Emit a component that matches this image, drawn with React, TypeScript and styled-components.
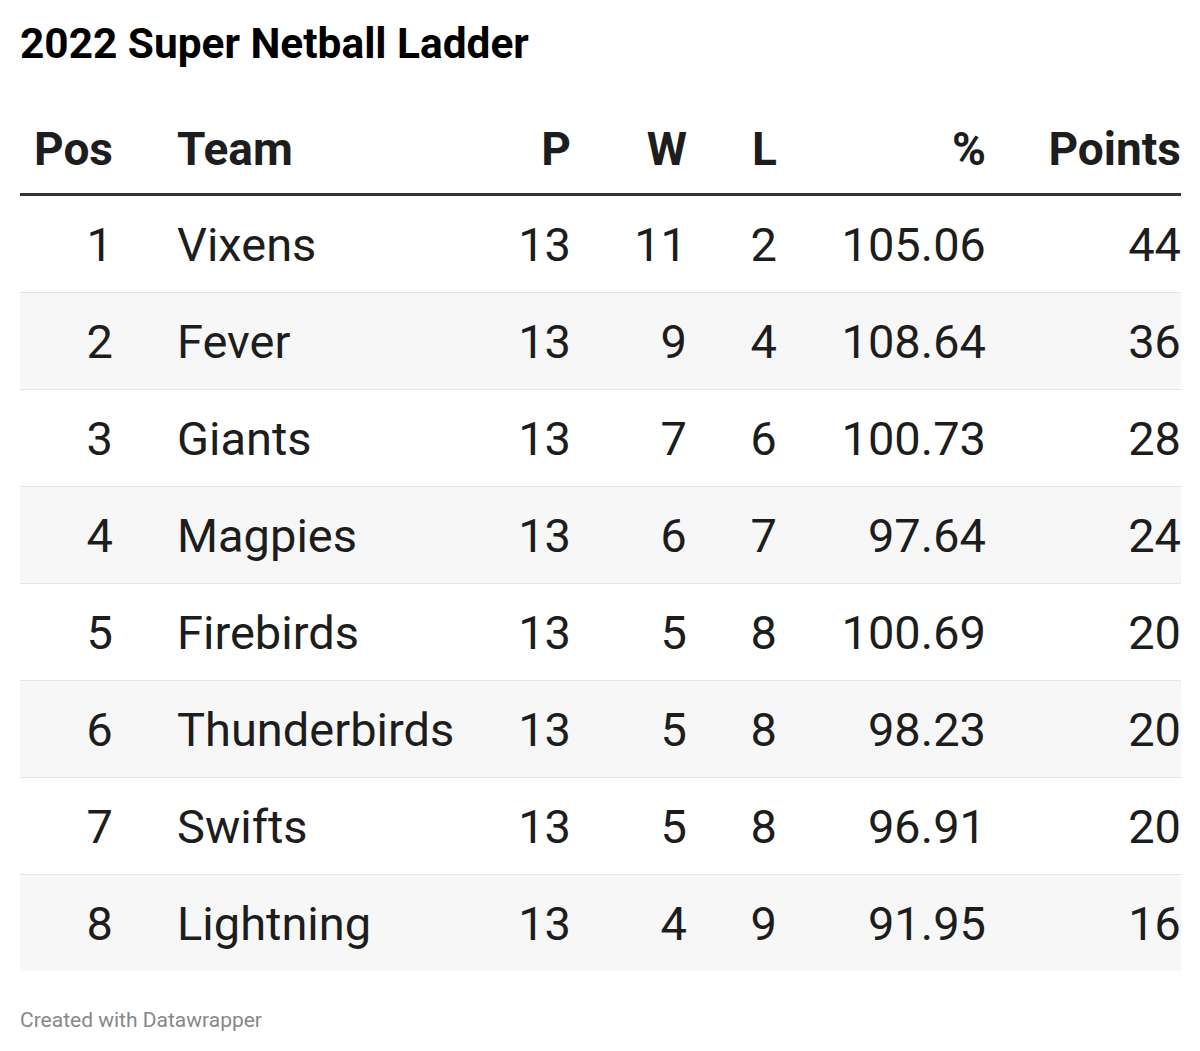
import React from "react";
import styled, { createGlobalStyle } from "styled-components";

const Global = createGlobalStyle`
  html, body { margin: 0; padding: 0; background: #ffffff; }
  body { font-family: Roboto, "Liberation Sans", Arial, sans-serif; color: #1d1d1d; }
`;

const Page = styled.div`
  width: 1200px;
  height: 1051px;
  box-sizing: border-box;
  padding: 20px 19px 0 20px;
  display: flex;
  flex-direction: column;
`;

const Title = styled.h1`
  margin: 0;
  font-size: 42.4px;
  font-weight: 700;
  line-height: 48px;
  color: #000000;
`;

const Table = styled.div`
  margin-top: 53px;
  display: flex;
  flex-direction: column;
`;

const COLS = "93px 367px 91px 116px 90px 209px 195px";

const HeaderRow = styled.div`
  display: grid;
  grid-template-columns: ${COLS};
  height: 75px;
  box-sizing: border-box;
  padding-bottom: 17px;
  align-items: center;
  border-bottom: 3px solid #333333;
`;

const Row = styled.div<{ $alt: boolean; $first: boolean }>`
  display: grid;
  grid-template-columns: ${COLS};
  height: 96px;
  align-items: center;
  background: ${(p) => (p.$alt ? "#f7f7f7" : "#ffffff")};
  border-top: ${(p) => (p.$first ? "none" : "1px solid #e4e4e4")};
`;

const HeadCell = styled.div<{ $align: "left" | "right"; $pl?: number }>`
  font-size: 46px;
  font-weight: 700;
  color: #1d1d1d;
  text-align: ${(p) => p.$align};
  padding-left: ${(p) => p.$pl ?? 0}px;
  white-space: nowrap;
`;

const Cell = styled.div<{ $align: "left" | "right"; $pl?: number }>`
  font-size: 47px;
  font-weight: 400;
  color: #1d1d1d;
  text-align: ${(p) => p.$align};
  padding-left: ${(p) => p.$pl ?? 0}px;
  white-space: nowrap;
  font-variant-numeric: tabular-nums;
`;

const Footer = styled.div`
  margin-top: 37px;
  font-size: 21px;
  color: #888888;
`;

const data = [
  [1, "Vixens", 13, 11, 2, "105.06", 44],
  [2, "Fever", 13, 9, 4, "108.64", 36],
  [3, "Giants", 13, 7, 6, "100.73", 28],
  [4, "Magpies", 13, 6, 7, "97.64", 24],
  [5, "Firebirds", 13, 5, 8, "100.69", 20],
  [6, "Thunderbirds", 13, 5, 8, "98.23", 20],
  [7, "Swifts", 13, 5, 8, "96.91", 20],
  [8, "Lightning", 13, 4, 9, "91.95", 16],
] as const;

export default function App() {
  return (
    <>
      <Global />
      <Page>
        <Title>2022 Super Netball Ladder</Title>
        <Table>
          <HeaderRow>
            <HeadCell $align="right">Pos</HeadCell>
            <HeadCell $align="left" $pl={64}>Team</HeadCell>
            <HeadCell $align="right">P</HeadCell>
            <HeadCell $align="right">W</HeadCell>
            <HeadCell $align="right">L</HeadCell>
            <HeadCell $align="right">%</HeadCell>
            <HeadCell $align="right">Points</HeadCell>
          </HeaderRow>
          {data.map((r, i) => (
            <Row key={r[0]} $alt={i % 2 === 1} $first={i === 0}>
              <Cell $align="right">{r[0]}</Cell>
              <Cell $align="left" $pl={64}>{r[1]}</Cell>
              <Cell $align="right">{r[2]}</Cell>
              <Cell $align="right">{r[3]}</Cell>
              <Cell $align="right">{r[4]}</Cell>
              <Cell $align="right">{r[5]}</Cell>
              <Cell $align="right">{r[6]}</Cell>
            </Row>
          ))}
        </Table>
        <Footer>Created with Datawrapper</Footer>
      </Page>
    </>
  );
}
